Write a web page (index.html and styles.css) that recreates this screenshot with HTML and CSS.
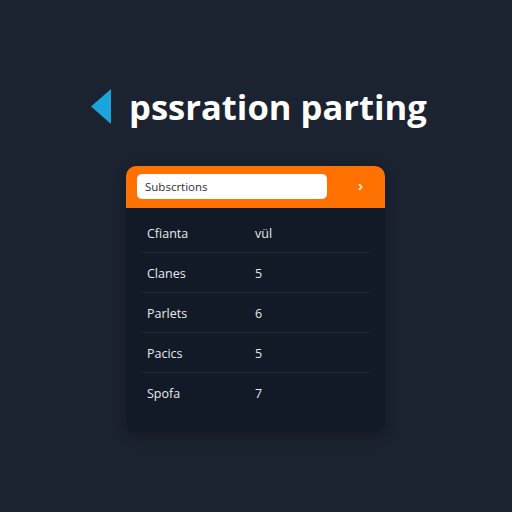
FILE: index.html
```html
<!DOCTYPE html>
<html>
<head>
<meta charset="utf-8">
<link rel="stylesheet" href="styles.css">
</head>
<body>
<div class="page">
  <div class="title">
    <svg class="tri" width="21" height="35" viewBox="0 0 21 35"><polygon points="20,0 20,35 0,17.5" fill="#1aa6dc"/></svg>
    <h1>pssration parting</h1>
  </div>
  <div class="card">
    <div class="head">
      <div class="search">Subscrtions</div>
      <span class="chev">›</span>
    </div>
    <div class="rows">
      <div class="row"><span class="label">Cfianta</span><span class="val">vül</span></div>
      <div class="row"><span class="label">Clanes</span><span class="val">5</span></div>
      <div class="row"><span class="label">Parlets</span><span class="val">6</span></div>
      <div class="row"><span class="label">Pacics</span><span class="val">5</span></div>
      <div class="row"><span class="label">Spofa</span><span class="val">7</span></div>
    </div>
  </div>
</div>
</body>
</html>
```
FILE: styles.css
```css
html, body {
  margin: 0;
  padding: 0;
  background: #1b2230;
  width: 512px;
  height: 512px;
  overflow: hidden;
}
.page {
  display: flex;
  flex-direction: column;
  padding-top: 89px;
  font-family: "Open Sans", "Liberation Sans", sans-serif;
}
.title {
  display: flex;
  align-items: center;
  margin-left: 91px;
  height: 35px;
}
.tri {
  display: block;
  flex: none;
}
h1 {
  margin: 0 0 0 17px;
  font-size: 34.6px;
  font-weight: 700;
  color: #ffffff;
  letter-spacing: 0;
  line-height: 35px;
}
.card {
  margin-top: 42px;
  margin-left: 126px;
  width: 259px;
  height: 266px;
  background: #121a27;
  border-radius: 10px;
  overflow: hidden;
  box-shadow: 0 4px 14px rgba(0,0,0,0.25);
}
.head {
  height: 42px;
  background: #ff7100;
  display: flex;
  align-items: center;
  padding: 0 11px;
}
.search {
  width: 182px;
  height: 25px;
  background: #ffffff;
  border-radius: 5px;
  padding-left: 8px;
  display: flex;
  align-items: center;
  font-size: 11.5px;
  color: #2b2f36;
  margin-bottom: 2px;
}
.chev {
  margin-left: 31px;
  color: #ffe6cc;
  font-size: 14px;
  font-weight: 700;
  line-height: 1;
  margin-top: -2px;
}
.rows {
  padding: 5px 14px 0 14px;
}
.row {
  height: 40px;
  display: flex;
  align-items: center;
  border-bottom: 1px solid #1d2636;
  box-sizing: border-box;
  font-size: 12.5px;
  color: #e8eaee;
  padding-top: 1px;
}
.row:last-child {
  border-bottom: none;
}
.label {
  width: 108px;
  padding-left: 7px;
}
.val {
  font-weight: 400;
}
```
